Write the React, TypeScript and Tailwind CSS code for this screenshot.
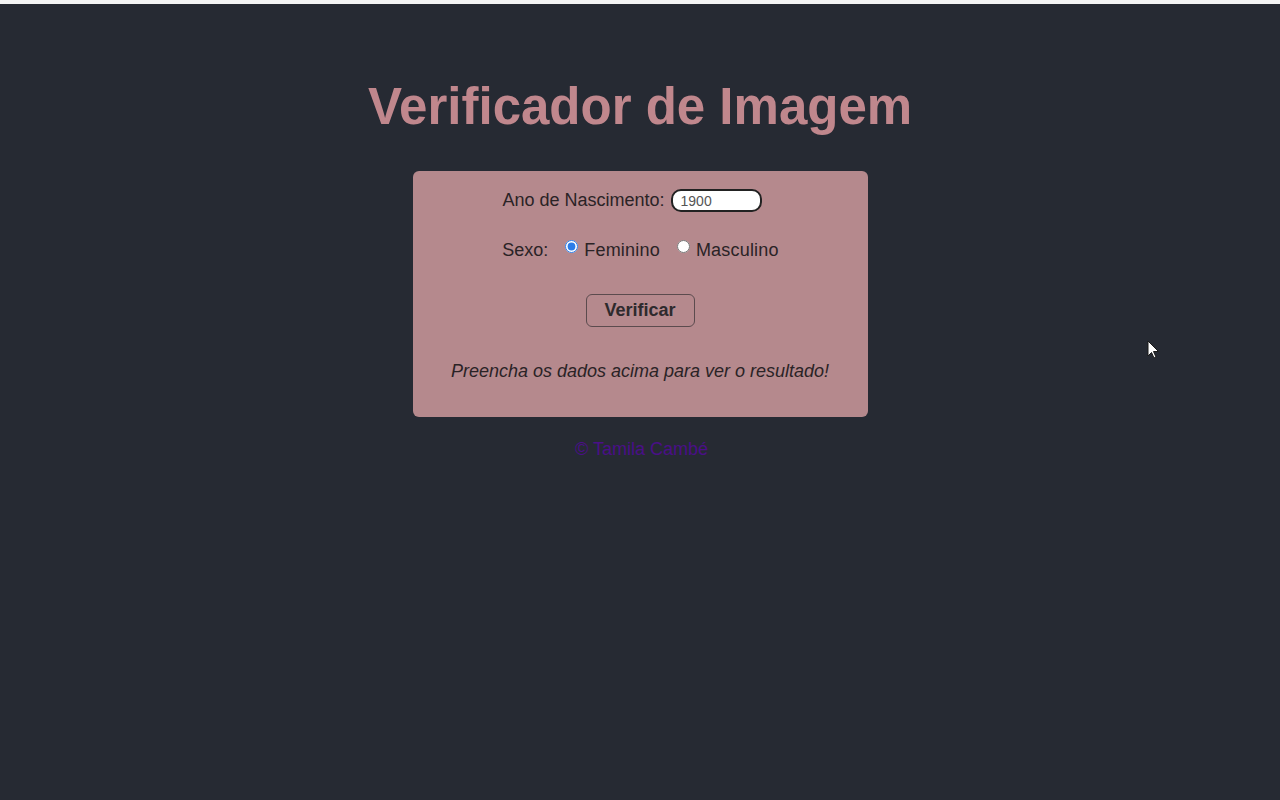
import { useState } from "react";

const Cursor = () => (
  <svg
    className="absolute left-[1147px] top-[336px]"
    width="14"
    height="20"
    viewBox="0 0 14 20"
  >
    <path
      d="M1 1 L1 16 L4.5 12.5 L7 18 L9 17 L6.5 11.5 L11.5 11.5 Z"
      fill="#ffffff"
      stroke="#1a1a1a"
      strokeWidth="1"
    />
  </svg>
);

export default function App() {
  const [ano, setAno] = useState("1900");
  const [sexo, setSexo] = useState("f");

  return (
    <div className="relative min-h-[800px] bg-[#262a33] font-['Liberation_Sans',Arial,sans-serif] border-t-4 border-[#f4f4f4]">
      <h1 className="pt-[74px] text-center text-[51px] leading-[58px] font-bold text-[#c0878d]">
        Verificador de Imagem
      </h1>

      <section className="mx-auto mt-[35px] w-[455px] rounded-md bg-[#b5898d] pt-[16px] pb-[32px] text-[18px] text-[#2a2326]">
        <div className="flex items-center justify-center gap-[6px] pr-[16px]">
          <label htmlFor="ano">Ano de Nascimento:</label>
          <input
            id="ano"
            type="text"
            value={ano}
            onChange={(e) => setAno(e.target.value)}
            className="h-[23px] w-[91px] rounded-[10px] border-2 border-[#222] bg-white px-[8px] text-[14px] text-[#555] outline-none"
          />
        </div>

        <div className="mt-[23px] flex items-center justify-center text-[18px] pl-[1px]">
          <span className="mr-[17px]">Sexo:</span>
          <label className="flex items-center">
            <input
              type="radio"
              name="sexo"
              checked={sexo === "f"}
              onChange={() => setSexo("f")}
              className="mr-[6px] -mt-[8px] h-[13px] w-[13px] accent-[#2b7de9]"
            />
            <span className="tracking-[0.2px]">Feminino</span>
          </label>
          <label className="ml-[17px] flex items-center">
            <input
              type="radio"
              name="sexo"
              checked={sexo === "m"}
              onChange={() => setSexo("m")}
              className="mr-[6px] -mt-[8px] h-[13px] w-[13px] accent-[#2b7de9]"
            />
            <span className="tracking-[0.2px]">Masculino</span>
          </label>
        </div>

        <div className="mt-[30px] flex justify-center">
          <button className="h-[33px] w-[109px] rounded-md border border-[#5b4b4e] bg-transparent text-[18px] font-bold text-[#2e2a2d]">
            Verificar
          </button>
        </div>

        <p className="mt-[31px] text-center text-[18px] italic text-[#2a2326]">
          Preencha os dados acima para ver o resultado!
        </p>
      </section>

      <footer className="mt-[19px] pl-[3px] text-center text-[18px] text-[#4a0f88]">
        © Tamila Cambé
      </footer>

      <Cursor />
    </div>
  );
}
